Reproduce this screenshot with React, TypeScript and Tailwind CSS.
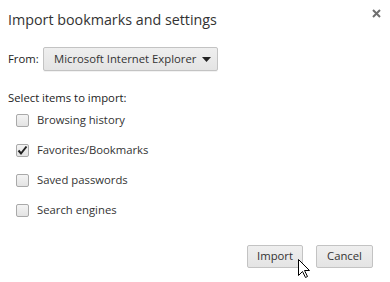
import { useState } from 'react'

const items = [
  { label: 'Browsing history', checked: false },
  { label: 'Favorites/Bookmarks', checked: true },
  { label: 'Saved passwords', checked: false },
  { label: 'Search engines', checked: false },
]

function Checkbox({ checked }: { checked: boolean }) {
  return (
    <span className="flex h-[13px] w-[13px] items-center justify-center rounded-[2px] border border-[#a9a9a9] bg-gradient-to-b from-[#f4f4f4] to-[#e3e3e3]">
      {checked && (
        <svg width="11" height="11" viewBox="0 0 11 11">
          <path d="M1.5 5.5 L4 8.5 L9.5 1.5" fill="none" stroke="#222" strokeWidth="2" />
        </svg>
      )}
    </span>
  )
}

function Cursor() {
  return (
    <svg className="absolute left-[298px] top-[259px]" width="13" height="20" viewBox="0 0 13 20">
      <path
        d="M0.5 0.5 L0.5 16.5 L4.5 12.5 L7.5 18.5 L9.5 17.5 L6.5 11.5 L11.5 11.5 Z"
        fill="#fff"
        stroke="#000"
        strokeWidth="1"
      />
    </svg>
  )
}

export default function App() {
  const [state] = useState(items)

  return (
    <div className="relative h-[282px] w-[390px] overflow-hidden whitespace-nowrap bg-white font-['Segoe_UI','Open_Sans',sans-serif] text-[11.3px] text-[#222]">
      {/* close */}
      <svg className="absolute left-[372px] top-[9px]" width="9" height="9" viewBox="0 0 9 9">
        <path d="M1 1 L8 8 M8 1 L1 8" stroke="#6f6f6f" strokeWidth="2" />
      </svg>

      <div className="flex flex-col pl-[8px]">
        <h1 className="mt-[10px] text-[14.3px] leading-[20px] text-[#333]">Import bookmarks and settings</h1>

        <div className="mt-[17px] flex h-[24px] items-center">
          <span className="w-[35px]">From:</span>
          <div className="flex h-[24px] w-[175px] items-center justify-between rounded-[2px] border border-[#c3c3c3] bg-gradient-to-b from-[#efefef] to-[#e4e4e4] pl-[10px] pr-[6px] shadow-[0_1px_0_rgba(0,0,0,0.05)]">
            <span className="text-[#333]">Microsoft Internet Explorer</span>
            <svg width="9" height="5" viewBox="0 0 9 5">
              <path d="M0 0 H9 L4.5 5 Z" fill="#222" />
            </svg>
          </div>
        </div>

        <div className="mt-[20px] leading-[14px]">Select items to import:</div>

        <div className="flex flex-col pl-[8px]">
          {state.map((it) => (
            <label key={it.label} className="flex h-[30px] items-center gap-[8px]">
              <Checkbox checked={it.checked} />
              <span className="text-[#333]">{it.label}</span>
            </label>
          ))}
        </div>

        <div className="mt-[20px] flex justify-end gap-[13px] pr-[17px]">
          <button className="h-[23px] w-[56px] rounded-[2px] border border-[#c3c3c3] bg-gradient-to-b from-[#efefef] to-[#e4e4e4] text-[#333]">
            Import
          </button>
          <button className="h-[23px] w-[57px] rounded-[2px] border border-[#c3c3c3] bg-gradient-to-b from-[#efefef] to-[#e4e4e4] text-[#333]">
            Cancel
          </button>
        </div>
      </div>

      <Cursor />
    </div>
  )
}
